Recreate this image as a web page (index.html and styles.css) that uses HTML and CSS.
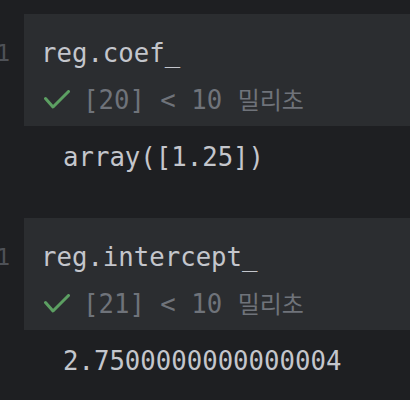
FILE: index.html
```html
<!DOCTYPE html>
<html lang="ko">
<head>
<meta charset="utf-8">
<link rel="stylesheet" href="styles.css">
</head>
<body>
  <section class="block">
    <div class="row">
      <div class="gutter"><span class="ln">1</span></div>
      <div class="cell">
        <div class="code">reg.coef_</div>
        <div class="status">
          <svg class="check" width="26" height="20" viewBox="0 0 26 20"><polyline points="1.5,8.5 9,17 24.5,1.5" fill="none" stroke="#5c9f62" stroke-width="3" stroke-linecap="round" stroke-linejoin="round"/></svg>
          <span>[20] &lt; 10 <span class="ko">밀리초</span></span>
        </div>
      </div>
    </div>
    <div class="output">array([1.25])</div>
  </section>
  <section class="block">
    <div class="row">
      <div class="gutter"><span class="ln">1</span></div>
      <div class="cell">
        <div class="code">reg.intercept_</div>
        <div class="status">
          <svg class="check" width="26" height="20" viewBox="0 0 26 20"><polyline points="1.5,8.5 9,17 24.5,1.5" fill="none" stroke="#5c9f62" stroke-width="3" stroke-linecap="round" stroke-linejoin="round"/></svg>
          <span>[21] &lt; 10 <span class="ko">밀리초</span></span>
        </div>
      </div>
    </div>
    <div class="output">2.7500000000000004</div>
  </section>
</body>
</html>
```

FILE: styles.css
```css
html, body {
  margin: 0;
  padding: 0;
  background: #1e1f22;
  overflow: hidden;
}
html {
  height: 400px;
}
body {
  width: 410px;
  padding-top: 14px;
  font-family: "DejaVu Sans Mono", "Liberation Mono", "Noto Sans CJK KR", monospace;
  font-size: 25.7px;
  color: #c4c6cc;
  box-sizing: border-box;
}
.row {
  display: flex;
}
.gutter {
  width: 24px;
  flex: none;
  display: flex;
  justify-content: flex-end;
  padding-top: 22px;
  box-sizing: border-box;
  overflow: hidden;
}
.ln {
  font-size: 23px;
  line-height: 34px;
  color: #4e5157;
  margin-right: 14px;
}
.cell {
  flex: 1;
  background: #2b2d30;
  height: 111.5px;
  padding: 22px 0 0 17px;
  box-sizing: border-box;
}
.code {
  line-height: 34px;
  white-space: pre;
}
.status {
  display: flex;
  align-items: center;
  gap: 13px;
  margin-top: 12px;
  height: 34px;
  line-height: 34px;
  color: #6f737a;
  padding-left: 3px;
  white-space: pre;
}
.check {
  display: block;
  flex: none;
  margin-top: 2px;
}
.ko {
  font-family: "Noto Sans CJK KR", sans-serif;
  font-size: 24px;
}
.output {
  padding: 14.65px 0 0 63px;
  height: 92.5px;
  box-sizing: border-box;
  line-height: 34px;
  white-space: pre;
}
```
